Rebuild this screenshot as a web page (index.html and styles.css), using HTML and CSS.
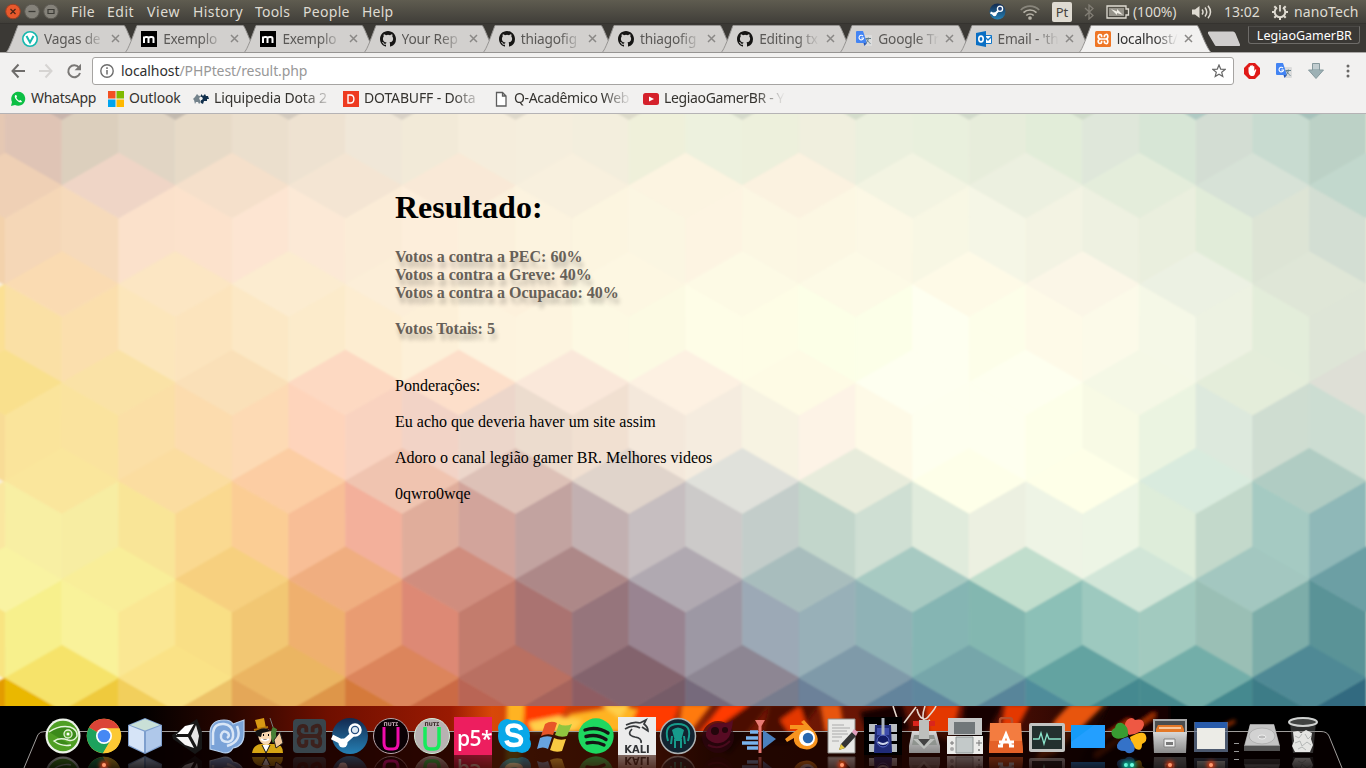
FILE: index.html
```html
<!DOCTYPE html>
<html lang="pt">
<head>
<meta charset="utf-8">
<title>localhost/PHPtest/result.php</title>
<link rel="stylesheet" href="styles.css">
</head>
<body>
<svg class="defs" width="0" height="0" aria-hidden="true">
  <defs>
    <symbol id="github" viewBox="0 0 16 16"><path fill="#161514" d="M8 0C3.58 0 0 3.58 0 8c0 3.54 2.29 6.53 5.47 7.59.4.07.55-.17.55-.38 0-.19-.01-.82-.01-1.49-2.01.37-2.53-.49-2.69-.94-.09-.23-.48-.94-.82-1.13-.28-.15-.68-.52-.01-.53.63-.01 1.08.58 1.23.82.72 1.21 1.87.87 2.33.66.07-.52.28-.87.51-1.07-1.78-.2-3.64-.89-3.64-3.95 0-.87.31-1.59.82-2.15-.08-.2-.36-1.02.08-2.12 0 0 .67-.21 2.2.82a7.6 7.6 0 0 1 4 0c1.53-1.04 2.2-.82 2.2-.82.44 1.1.16 1.92.08 2.12.51.56.82 1.27.82 2.15 0 3.07-1.87 3.75-3.65 3.95.29.25.54.73.54 1.48 0 1.07-.01 1.93-.01 2.2 0 .21.15.46.55.38A8.01 8.01 0 0 0 16 8c0-4.42-3.58-8-8-8z"/></symbol>
    <symbol id="translate" viewBox="0 0 16 16"><path fill="#dcdcdc" d="M6 4h9a1 1 0 0 1 1 1v9a1 1 0 0 1-1 1H9z"/><path fill="#4384f3" d="M1 0h6l4 12H1a1 1 0 0 1-1-1V1a1 1 0 0 1 1-1z"/><path fill="#2454b8" d="M7.500 12H11l-2.500 3z"/><path d="M7 5a2.300 2.300 0 1 0 .6 2H5.300" fill="none" stroke="#fff" stroke-width="1.100"/><path d="M9.500 7.500h5.500M12.300 6.500v1c0 2-1.500 4-2.800 5M10.500 8c1 2 2.500 3.700 4 4.500" fill="none" stroke="#62808c"/></symbol>
    <symbol id="mcube" viewBox="0 0 16 16"><path d="M0 0h16v16H0z"/><path d="M3 12V5.500M3 7.500c0-1.500 4.500-2.500 4.500 0V12M7.500 7.500c0-1.500 5-2.500 5 0V12" fill="none" stroke="#fff" stroke-width="2"/></symbol>
    <symbol id="xampp" viewBox="0 0 16 16"><path d="M6.600 6.300V4.800Q6.600 3.500 5 3.500T3.200 5.500 5.500 8h5Q12.800 8 12.800 5.500T11 3.500 9.400 4.800V6.300M6.600 9.700v1.500q0 1.300-1.600 1.300T3.200 10.500 5.500 8h5q2.300 0 2.300 2.500T11 12.500 9.400 11.200V9.700" fill="none" stroke="currentColor" stroke-width="1.700"/></symbol>
    <symbol id="xmark" viewBox="0 0 9 9"><path d="M1 1l7 7M8 1L1 8" fill="none" stroke="#8a8886" stroke-width="1.500"/></symbol>
    <symbol id="tabshape" viewBox="0 0 132 28"><path d="M0 27.500C3 26 9 8 12 .5H118c2 0 8 20 14 27z" stroke="#969492"/></symbol>
    <linearGradient id="gSilver" x2="0" y2="1"><stop stop-color="#d8d8d8"/><stop offset="1" stop-color="#8b8b8b"/></linearGradient>
    <linearGradient id="gSteam" x2="0" y2="1"><stop stop-color="#13294f"/><stop offset="1" stop-color="#2580b4"/></linearGradient>
  </defs>
</svg>

<header class="panel">
  <div class="wbtns">
    <svg width="54" height="18" viewBox="0 0 54 18"><circle cx="8" cy="8.500" r="7.300" fill="#e8592c" stroke="#9a4024"/><path d="M5.500 6l5 5m0-5l-5 5" stroke="#4b2416" stroke-width="1.300"/><circle cx="27" cy="8.500" r="7.300" fill="#85827a" stroke="#5c5952"/><path d="M23.500 8.500h7" stroke="#3b3a35" stroke-width="1.300"/><circle cx="46" cy="8.500" r="7.300" fill="#85827a" stroke="#5c5952"/><path d="M43 6.500h6v4h-6z" fill="none" stroke="#3b3a35" stroke-width="1.200"/></svg>
  </div>
  <nav class="menu"><span class="m1">File</span><span class="m2">Edit</span><span class="m3">View</span><span class="m4">History</span><span class="m5">Tools</span><span class="m6">People</span><span class="m7">Help</span></nav>
  <div class="indicators">
    <svg class="i-steam" width="17" height="17" viewBox="0 0 17 17"><circle cx="8.500" cy="8.500" r="8" fill="url(#gSteam)"/><path d="M1.500 9.500l4 2L10 7" fill="none" stroke="#fff" stroke-width="2.200"/><circle cx="11" cy="5.700" r="2.600" fill="#24457a" stroke="#fff" stroke-width="1.300"/><circle cx="5.500" cy="11.300" r="2" fill="#fff"/></svg>
    <svg class="i-wifi" width="20" height="16" viewBox="0 0 20 16" fill="none" stroke="#b6b2a7" stroke-width="1.700"><path d="M.8 6C6 .8 14 .8 19.200 6" stroke="#89867c"/><path d="M3.500 8.700c3.600-3.600 9.400-3.600 13 0M6.300 11.500c2-2 5.400-2 7.400 0"/><circle cx="10" cy="14" r="1" fill="#dfdbd2"/></svg>
    <span class="kbd">Pt</span>
    <svg class="i-bt" width="10" height="16" viewBox="0 0 10 16" fill="none" stroke="#827e75" stroke-width="1.300"><path d="M1 4l8 7.500L5 15V1l4 3.500L1 12"/></svg>
    <svg class="i-bat" width="24" height="14" viewBox="0 0 24 14"><path d="M1 1h19v3h2.500v6H20v3H1z" fill="none" stroke="#dfdbd2" stroke-width="1.300"/><path d="M3 3h15v8H3z" fill="#96938a"/><path d="M5 4l6 2.500V4l6 6-6-2v2z" fill="#f1eee6"/></svg>
    <span class="pct">(100%)</span>
    <svg class="i-vol" width="20" height="14" viewBox="0 0 20 14" fill="none" stroke="#dfdbd2" stroke-width="1.500"><path d="M0 4.500h3L7.500 1v12L3 9.500H0z" fill="#dfdbd2" stroke="none"/><path d="M10 4.500q2 2.500 0 5M13 2.500q3.500 4.500 0 9M16 .8q5 6.200 0 12.400"/></svg>
    <span class="clock">13:02</span>
    <svg class="i-gear" width="18" height="18" viewBox="0 0 18 18" fill="none" stroke="#dfdbd2"><path d="M6 4.600a5.300 5.300 0 1 0 6 0" stroke-width="2"/><path d="M9 2v6.500" stroke-width="1.800"/><path d="M1 9h3M14 9h3M9 14v3M3.300 3.300l2 2M14.700 3.300l-2 2M3.300 14.700l2-2M14.700 14.700l-2-2" stroke-width="2"/></svg>
    <span class="user">nanoTech</span>
  </div>
</header>

<div class="tabstrip">
  <div class="tab"><svg class="shape"><use href="#tabshape"/></svg><svg class="fav" viewBox="0 0 16 16"><circle cx="8" cy="8" r="7.200" fill="#fff" stroke="#15b8ae" stroke-width="1.600"/><path d="M4.500 5L8 11.500 11.500 5" fill="none" stroke="#15b8ae" stroke-width="2"/></svg><span class="title">Vagas de</span><svg class="x"><use href="#xmark"/></svg></div>
  <div class="tab"><svg class="shape"><use href="#tabshape"/></svg><svg class="fav"><use href="#mcube"/></svg><span class="title">Exemplo</span><svg class="x"><use href="#xmark"/></svg></div>
  <div class="tab"><svg class="shape"><use href="#tabshape"/></svg><svg class="fav"><use href="#mcube"/></svg><span class="title">Exemplo</span><svg class="x"><use href="#xmark"/></svg></div>
  <div class="tab"><svg class="shape"><use href="#tabshape"/></svg><svg class="fav"><use href="#github"/></svg><span class="title">Your Rep</span><svg class="x"><use href="#xmark"/></svg></div>
  <div class="tab"><svg class="shape"><use href="#tabshape"/></svg><svg class="fav"><use href="#github"/></svg><span class="title">thiagofig</span><svg class="x"><use href="#xmark"/></svg></div>
  <div class="tab"><svg class="shape"><use href="#tabshape"/></svg><svg class="fav"><use href="#github"/></svg><span class="title">thiagofig</span><svg class="x"><use href="#xmark"/></svg></div>
  <div class="tab"><svg class="shape"><use href="#tabshape"/></svg><svg class="fav"><use href="#github"/></svg><span class="title">Editing tx</span><svg class="x"><use href="#xmark"/></svg></div>
  <div class="tab"><svg class="shape"><use href="#tabshape"/></svg><svg class="fav"><use href="#translate"/></svg><span class="title">Google Tr</span><svg class="x"><use href="#xmark"/></svg></div>
  <div class="tab"><svg class="shape"><use href="#tabshape"/></svg><svg class="fav" viewBox="0 0 16 16"><path fill="#fff" stroke="#1277c8" d="M8 4.500h7.500v8H8z"/><path d="M8 5l4 4 4-4" fill="none" stroke="#1277c8" stroke-width="1.300"/><path fill="#0a6fc4" d="M0 2l10-2v16L0 14z"/><ellipse cx="5" cy="8" rx="2.200" ry="2.900" fill="none" stroke="#fff" stroke-width="1.600"/></svg><span class="title">Email - 'th</span><svg class="x"><use href="#xmark"/></svg></div>
  <div class="tab active"><svg class="shape"><use href="#tabshape"/></svg><svg class="fav xa" viewBox="0 0 16 16"><rect width="16" height="16" rx="1.500" fill="#ef7626"/><use href="#xampp" width="16" height="16"/></svg><span class="title">localhost/</span><svg class="x"><use href="#xmark"/></svg></div>
  <svg class="newtab" width="34" height="16" viewBox="0 0 34 16"><path d="M2 .5h24q1.500 0 2.500 2l4.500 11q.5 1.500-1 1.500H9.500q-1.500 0-2-1.500L1 2.500Q.5.500 2 .5z" fill="#d0cecd"/></svg>
  <div class="profile">LegiaoGamerBR</div>
</div>

<div class="toolbar">
  <svg class="navs" width="72" height="16" viewBox="0 0 72 16" fill="none" stroke-width="2"><path d="M15 8H2.500M8.500 1.500L2.500 8l6 6.500" stroke="#6f6d6b"/><path d="M29 8h12.500M35.500 1.500l6 6.500-6 6.500" stroke="#d6d4d2"/><path d="M69 4.500A6 6 0 1 0 70 10" stroke="#7a7876"/><path d="M71 .8v6.400h-6.400z" fill="#7a7876"/></svg>
  <div class="omnibox">
    <svg class="info" width="14" height="14" viewBox="0 0 14 14"><circle cx="7" cy="7" r="6.200" fill="none" stroke="#6d6d6d" stroke-width="1.400"/><path d="M7 6v4.500M7 3.300v1.600" stroke="#6d6d6d" stroke-width="1.500"/></svg>
    <span class="url">localhost<i>/PHPtest/result.php</i></span>
    <svg class="star" width="14" height="14" viewBox="0 0 14 14"><path d="M7 1l1.700 4.100 4.400.3-3.400 2.900 1.100 4.300L7 10.300l-3.800 2.300 1.100-4.300L.9 5.400l4.400-.3z" fill="none" stroke="#666" stroke-width="1.200"/></svg>
  </div>
  <svg class="ext1" width="16" height="16" viewBox="0 0 16 16"><path d="M5 0h6l5 5v6l-5 5H5l-5-5V5z" fill="#e01a17"/><path d="M4.500 8V4.500q.7-.8 1.300 0V3q.8-.8 1.500 0v-.5q.8-.8 1.500 0V3.500q.8-.8 1.500 0V8l1-1.500q1-.5 1 .5L10.500 12q-.5 1-1.500 1H7q-2.500-1-2.500-5z" fill="#fff"/></svg>
  <svg class="ext2" width="16" height="16"><use href="#translate"/></svg>
  <svg class="ext3" width="16" height="16" viewBox="0 0 16 16"><path d="M4.500.5h7v6.500h4L8 15.500.5 7h4z" fill="#9db1b5" stroke="#86999d"/><path d="M5 1h6v5H5z" fill="#c2cdd0"/></svg>
  <svg class="dots" width="4" height="14" viewBox="0 0 4 14" fill="#6a6866"><circle cx="2" cy="2" r="1.500"/><circle cx="2" cy="7" r="1.500"/><circle cx="2" cy="12" r="1.500"/></svg>
</div>

<div class="bookmarks">
  <div class="bm b1"><svg width="16" height="16" viewBox="0 0 16 16"><path d="M1 15l1-4a7 7 0 1 1 3 3z" fill="#0cbf44"/><path d="M5.500 4c-1.500 1-.5 3.500 1.500 5.500s4.500 2.500 5 1L10.500 9 9 9.700Q7 8.500 6.300 6.800L7 5.800 6.300 4z" fill="#fff"/></svg><span class="w1">WhatsApp</span></div>
  <div class="bm b2"><svg width="16" height="16" viewBox="0 0 16 16"><path fill="#f25022" d="M0 0h7.500v7.500H0z"/><path fill="#7fba00" d="M8.500 0H16v7.500H8.500z"/><path fill="#00a4ef" d="M0 8.500h7.500V16H0z"/><path fill="#ffb900" d="M8.500 8.500H16V16H8.500z"/></svg><span class="w2">Outlook</span></div>
  <div class="bm b3"><svg width="16" height="16" viewBox="0 0 16 16"><path d="M4 3l2 2 2-.5V8L7 9l1 2-2 2-1-2H3L2 13 1 9 0 8l2-2z" fill="#74838c"/><path d="M8 3l2 2 2-2 1 2 2 0 1 3-2 0 0 2-3 0-1 3-2-1z" fill="#12304d"/><circle cx="8" cy="7.500" r="1.700" fill="#f2f1f0"/></svg><span class="w3 fade">Liquipedia Dota 2 </span></div>
  <div class="bm b4"><svg width="16" height="16" viewBox="0 0 16 16"><path fill="#ee3b20" d="M0 0h16v16H0z"/><path d="M5 4h2.500c4.500 0 4.500 8 0 8H5z" fill="none" stroke="#fff" stroke-width="1.400"/></svg><span class="w4 fade">DOTABUFF - Dota</span></div>
  <div class="bm b5"><svg width="16" height="16" viewBox="0 0 16 16"><path d="M3.500 1.500h6l3.500 3.500v10H3.500zM9.500 1.500V5H13" fill="#fff" stroke="#5d5d5d" stroke-width="1.300"/></svg><span class="w5 fade">Q-Acadêmico Web</span></div>
  <div class="bm b6"><svg width="16" height="16" viewBox="0 0 16 16"><rect y="2" width="16" height="12" rx="2.500" fill="#d5212b"/><path d="M6 5.500l5 2.500-5 2.500z" fill="#fff"/></svg><span class="w6 fade">LegiaoGamerBR - Y</span></div>
</div>

<main class="page">
  <svg class="hexes" id="hexes" viewBox="0 114 1366 592" preserveAspectRatio="none"></svg>
  <section class="result">
    <h1>Resultado:</h1>
    <p class="votes">Votos a contra a PEC: 60%<br>Votos a contra a Greve: 40%<br>Votos a contra a Ocupacao: 40%<br><br>Votos Totais: 5</p>
    <p class="notes">Ponderações:<br><br>Eu acho que deveria haver um site assim<br><br>Adoro o canal legião gamer BR. Melhores videos<br><br>0qwro0wqe</p>
  </section>
</main>

<footer class="dock">
  <svg class="scene" viewBox="0 706 1366 62" preserveAspectRatio="none">
    <defs>
      <linearGradient id="gFire"><stop offset=".1" stop-color="#000"/><stop offset=".17" stop-color="#2a0600"/><stop offset=".24" stop-color="#6f0f00"/><stop offset=".33" stop-color="#9a1a02"/><stop offset=".36" stop-color="#d84808"/><stop offset=".48" stop-color="#c43406"/><stop offset=".52" stop-color="#7a1c04"/><stop offset=".7" stop-color="#5e1104"/><stop offset=".8" stop-color="#240602"/><stop offset=".84" stop-color="#000"/></linearGradient>
      <filter id="soft" x="-5%" y="-20%" width="110%" height="140%"><feGaussianBlur stdDeviation="2"/></filter>
    </defs>
    <path fill="url(#gFire)" d="M0 706h1366v62H0z"/>
    <g filter="url(#soft)">
      <path fill="#ffb320" d="M507 700h18l-5 68h-15zM570 714l50-8 35 6-30 20h-70z"/>
      <path fill="#ff3a00" d="M524 704h44l-14 24-30 12zM640 704h40l-10 26-45 5zM722 704h36l-40 30-20 0z"/>
      <path fill="#ffcf4a" d="M528 722l30-6 25 4-10 12h-40zM600 704h30l-10 14z"/>
      <path fill="#ff7a10" d="M682 704h30l-22 28h-12z"/>
      <path fill="#e8540a" d="M820 704h20l5 30-20-2zM1070 704h35l-50 50-20 6 20-40z"/>
      <path fill="#4c0f05" d="M700 740l50-36h20l-40 50zM770 704h50l-30 40h-30z"/>
      <path fill="#e43703" d="M780 720l20-14 12 34-14 6zM925 704h35l-10 38-22-10zM1005 704h25l-18 34-12-6z"/>
      <path fill="#160503" d="M965 704h38l-28 50-15-8zM1110 704h60v60h-90zM860 712l42-8 8 26-40 10z"/>
      <path fill="none" stroke="#c93c08" stroke-width="3" d="M1130 720l-35 24M1155 714l-60 42M1235 721l-20 10"/>
    </g>
    <path fill="none" stroke="#e4d6cc" stroke-width="1.600" d="M904 723l12-16M893 706l4 12M917 709c2 10 8 12 11 8s6-6 8-11M925 706c-4 12-2 18 5 14"/>
    <path fill="#080000" fill-opacity=".76" d="M24 768L38 735Q40 732 45 732H1321Q1327 732 1329 736L1342 768z"/>
    <path fill="none" stroke="#a09d9b" d="M24 768L38 734.500Q40 731.500 45 731.500H1321Q1327 731.500 1329 736L1342 768"/>
  </svg>
  <div class="icons">
    <span class="ic"><svg viewBox="0 0 38 38"><circle cx="19" cy="19" r="17.500" fill="#edf3ea"/><circle cx="19" cy="19" r="15.300" fill="#4f9f24"/><path d="M5 15q10-7 21-5 8 3 7 9-3 6-9 4-8-3-14 1 8 6 17 4" fill="#3b8a1a" stroke="#e6f5dc" stroke-width="1.500"/><circle cx="24" cy="17" r="4" fill="#59a82d" stroke="#e6f5dc" stroke-width="1.300"/><circle cx="24" cy="17" r="1.500" fill="#fff"/></svg></span>
    <span class="ic"><svg viewBox="0 0 38 38"><circle cx="19" cy="19" r="17.300" fill="#fcc934"/><path d="M19 19L4 10.500A17.300 17.300 0 0 1 34.500 11.500H19z" fill="#db4437"/><path d="M19 19L4 10.500A17.300 17.300 0 0 0 18 36.300l8-14z" fill="#1da25d"/><path d="M19 11.500h15.500Q37 19 33 29q-5 7-15 7.300L26 23z" fill="#fcc934"/><circle cx="19" cy="19" r="8" fill="#fff"/><circle cx="19" cy="19" r="6.300" fill="#4688f4"/></svg></span>
    <span class="ic"><svg viewBox="0 0 38 38"><path d="M19 1l17 7v21l-17 8-17-8V8z" fill="#7e9fce"/><path d="M3 8.500l15 6v21L3 28z" fill="#d6e4f7"/><path d="M20 14.500l15-6V28l-15 7.500z" fill="#afc8ea"/><path d="M19 2l15 6-15 5.500L4 8z" fill="#c9e0d7"/></svg></span>
    <span class="ic"><svg viewBox="0 0 38 38"><path d="M5 18L30 2l5 13v17l-7 5L6 22z" fill="#171717"/><path d="M9 18l9-9 9-2-6 10H9z" fill="#fff"/><path d="M29 8l3 11-2 11-6-11z" fill="#e5e5e5"/><path d="M9 20h12l6 11-9-3z" fill="#f6f6f6"/></svg></span>
    <span class="ic"><svg viewBox="0 0 38 38"><path d="M2 32V15Q3 3 16 3q7 0 9 4l11-4v14q0 12-11 14-4 7-12 4z" fill="#7ba3d8" stroke="#b9d1ee" stroke-width="1.200"/><path d="M5 28V16Q6 6 16 7q8 1 9 9t-5 9q-8 0-7-7 2-6 7-2 2 3-1 5M29 9q6 15-10 20" fill="none" stroke="#d9e6f6" stroke-width="2.500"/></svg></span>
    <span class="ic"><svg viewBox="0 0 38 38"><path d="M3 36q1-8 9-9h14q8 0 8 9z" fill="#d7a514"/><path d="M6 3l9-2 2 10-8 2z" fill="#d99913"/><path d="M5 13l14-3" stroke="#b17208" stroke-width="2"/><path d="M9 16q2-6 10-4 6 3 3 12-3 6-8 3-5-3-5-11z" fill="#f7d7b0"/><path d="M6 15q9-7 16-1l-9 2-1 4-4-1z" fill="#111"/><path d="M12 22q4 3 8 0" stroke="#fff" stroke-width="2"/><path d="M14 18h1m4 0h1" stroke="#000" stroke-width="2"/><path d="M24 10L21 1" stroke="#777"/><path d="M26 11q-3 5 0 14" fill="none" stroke="#477f36" stroke-width="5"/><path d="M25 23l6-8 3 11-7 5z" fill="#f2c99d" stroke="#222"/><path d="M13 28l4 8 4-8" fill="#fff" stroke="#111"/></svg></span>
    <span class="ic xd"><svg viewBox="0 0 38 38"><rect x="3" y="2" width="33" height="34" rx="4" fill="#39454c"/><use href="#xampp" x="1" y="1" width="37" height="36"/></svg></span>
    <span class="ic"><svg viewBox="0 0 38 38"><circle cx="19" cy="19" r="18" fill="url(#gSteam)"/><path d="M1 20l12 6M12 26l10-9" stroke="#fff" stroke-width="5"/><circle cx="12" cy="26" r="4.500" fill="#fff"/><circle cx="24" cy="13" r="5.500" fill="#244c7d" stroke="#fff" stroke-width="2.500"/><circle cx="24" cy="13" r="3" fill="#dce8f2"/></svg></span>
    <span class="ic"><svg viewBox="0 0 38 38"><circle cx="19" cy="19" r="17.500" fill="#0b0105" stroke="#b9a6aa"/><text x="19" y="8.500" text-anchor="middle" class="tiny light">ΠUTΣ</text><path d="M12 10v16q0 6 5 6h4q5 0 5-6V10" fill="none" stroke="#f20cab" stroke-width="3"/></svg></span>
    <span class="ic"><svg viewBox="0 0 38 38"><circle cx="19" cy="19" r="17.500" fill="#b8b2b2" stroke="#d5ebd8"/><text x="19" y="8.500" text-anchor="middle" class="tiny">ΠUTΣ</text><path d="M12 10v16q0 6 5 6h4q5 0 5-6V10" fill="none" stroke="#17eb5c" stroke-width="3.500"/></svg></span>
    <span class="ic"><svg viewBox="0 0 38 38"><path fill="#ed1e5f" d="M0 0h38v38H0z"/><text x="3" y="29" class="p5">p5*</text></svg></span>
    <span class="ic"><svg viewBox="0 0 38 38"><circle cx="19" cy="19" r="16" fill="#0aa8e8"/><circle cx="12" cy="11" r="9" fill="#0aa8e8"/><circle cx="27" cy="27" r="9" fill="#0aa8e8"/><path d="M26 13q-1-4.500-7-4.500-6.500 0-6.500 4.500t6.500 5q7 1 7 5.500T19 28q-6.500 0-7.500-4.500" fill="none" stroke="#fff" stroke-width="4.500"/></svg></span>
    <span class="ic"><svg viewBox="0 0 38 38"><path d="M9 7q6-4 12-1l-4 12q-6-2-12 1z" fill="#e75528"/><path d="M23 7q6 3 13 0l-5 12q-6 2-12-1z" fill="#90c53f"/><path d="M4 21q6-3 12-1l-4 12q-5-3-11 0z" fill="#68a4df"/><path d="M18 21q6 3 12 1l-4 12q-6 2-12-1z" fill="#f8c942"/></svg></span>
    <span class="ic"><svg viewBox="0 0 38 38"><circle cx="19" cy="19" r="17.700" fill="#1ed760"/><path d="M8 13q12-4 23 3M9 19.500q11-3 20 3M10 26q9-2 17 2" fill="none" stroke="#151515" stroke-width="3.400" stroke-linecap="round"/></svg></span>
    <span class="ic"><svg viewBox="0 0 38 38"><path fill="#ececec" d="M0 0h38v38H0z"/><path d="M8 8q8-4 14-2M7 12q8-5 15-1M22 6l6-3-2 4q4 3 4 7l-6-4M14 12q-6 6 3 8 7 1 6 6" fill="none" stroke="#36393c" stroke-width="1.700"/><text x="19" y="36" text-anchor="middle" class="kali">KALI</text></svg></span>
    <span class="ic"><svg viewBox="0 0 38 38"><circle cx="19" cy="19" r="17.500" fill="#122330" stroke="#abb1b2" stroke-width="1.500"/><path d="M9 24q-5-17 10-17t10 17M12 27l1-8m13 8l-1-8M16 31v-9m6 9v-9" fill="none" stroke="#169b8b" stroke-width="2"/><path d="M13 13q6-5 12 0l-3 11h-6z" fill="#169b8b"/></svg></span>
    <span class="ic"><svg viewBox="0 0 38 38"><circle cx="18" cy="20" r="16" fill="#2c0610" opacity=".7"/><path d="M6 16Q10 5 19 6t14-3q-1 11-4 17-7 9-17 5-7-3-6-9z" fill="#570b23"/><circle cx="15" cy="14" r="4" fill="#23060b"/><circle cx="25" cy="13" r="3" fill="#23060b"/><path d="M8 28q12 6 22-4" stroke="#470a1c" stroke-width="2" fill="none"/></svg></span>
    <span class="ic"><svg viewBox="0 0 38 38"><path d="M9 15h8M5 21h12M1 26h16M6 31h11" stroke="#79b3ed" stroke-width="3.500"/><path d="M22 13l13 9-13 10z" fill="#4a80bd"/><path d="M14 3h10l-3.500 6v27h-3V9z" fill="#e77973"/></svg></span>
    <span class="ic"><svg viewBox="0 0 38 38"><path d="M3 22L16 12H8V8h14l-3-3 3-2 11 12q5 8 1 13-6 7-16 3-7-4-6-10l-7 4z" fill="#f7941f"/><circle cx="25" cy="21" r="8" fill="#fff"/><circle cx="26" cy="21" r="5.200" fill="#2867af"/></svg></span>
    <span class="ic"><svg viewBox="0 0 38 38"><path d="M5 2h27v34H5z" fill="#e8e8e6" stroke="#8f8f8b"/><path d="M9 8h12M9 11h18M9 14h15M9 17h16M9 20h10M9 24h7" stroke="#aaa"/><path d="M18 27L29 15l4 4-11 12-6 2z" fill="#343434"/><path d="M18 27l4 4-6 2z" fill="#e6ca42"/><path d="M29 15l2-3 4 3-2 4z" fill="#e3a0bd"/></svg></span>
    <span class="ic"><svg viewBox="0 0 38 38"><path d="M0 0h38v38H0z" fill="#000"/><path d="M5 7h8v8H5zm20 0h8v8h-8zM5 17h8v7H5zm20 0h8v7h-8zM5 27h8v8H5zm20 0h8v8h-8z" fill="#b8bec3"/><path d="M11 8h16l1 28H10z" fill="#202b78"/><path d="M13 11h12v7H13z" fill="#3d4cab"/><path d="M19 1v18" stroke="#aab3bd" stroke-width="3"/><circle cx="19" cy="24" r="6" fill="#121b65" stroke="#5b6bc9"/><path d="M14 25q5 4 10 0" stroke="#cdd6ed" stroke-width="2" fill="none"/></svg></span>
    <span class="ic"><svg viewBox="0 0 38 38"><path d="M8 4h22v5H8z" fill="#da251c"/><path d="M7 14h24l4 15v7H4v-7z" fill="url(#gSilver)"/><path d="M9 18h20l3 10H7z" fill="#8f948f"/><path d="M14 3h10v19h6L19 32 8 22h6z" fill="#bdc0bd"/><path d="M13 22h12l-6 7z" fill="#434343"/></svg></span>
    <span class="ic"><svg viewBox="0 0 38 38"><path d="M2 1h34v17H2z" fill="#c6c8c8"/><path d="M8 5h21v12H8z" fill="#71777a"/><path d="M1 19h36v18H1z" fill="#ededeb"/><path d="M10 20h17v16H10z" fill="#c3c9c9" stroke="#8f9696"/><path d="M4 26h4m-2-2v4M30 26h6m-3-3v6" stroke="#777"/><circle cx="6" cy="32" r="2" fill="#aaa"/><circle cx="33" cy="33" r="1" fill="#777"/></svg></span>
    <span class="ic"><svg viewBox="0 0 38 38"><path d="M13 12V3q0-2 3-2h6q3 0 3 2v9" fill="none" stroke="#b6512e" stroke-width="2.500"/><path d="M3 6h31l2 30H2z" fill="#f37c40"/><path d="M3 24h32l1 12H2z" fill="#e46127"/><path d="M14 29l5-12 5 12M12 25h15M11 29h5m6 0h5" fill="none" stroke="#fff" stroke-width="2.800"/></svg></span>
    <span class="ic"><svg viewBox="0 0 38 38"><rect x="1" y="6" width="36" height="29" rx="2" fill="#c3c4c2"/><path d="M4 9h30v23H4z" fill="#23302f"/><path d="M5 22h6l2-6 3 11 3-10 2 5h12" fill="none" stroke="#8ce5cc" stroke-width="1.300"/></svg></span>
    <span class="ic"><svg viewBox="0 0 38 38"><path d="M2 8h34v23H2z" fill="#159bf8"/><path d="M2 25L25 8h11v23H2z" fill="#239fff"/></svg></span>
    <span class="ic"><svg viewBox="0 0 38 38"><path d="M19 18Q12 9 17 3q5-4 8 0 9-2 9 5-2 9-15 10z" fill="#ee5843"/><path d="M18 19Q6 25 2 18q-2-5 3-7 1-6 7-5 7 3 6 13z" fill="#389c32"/><path d="M20 20q14-8 16-1 2 5-4 8 0 8-6 5-5-4-6-12z" fill="#ffb914"/><path d="M18 20q10 11 5 15-5 3-8-1-9 0-8-6 3-7 11-8z" fill="#3472c8"/></svg></span>
    <span class="ic"><svg viewBox="0 0 38 38"><path d="M3 3h32v13H3z" fill="#4b4d4e" stroke="#aaa" stroke-width="2"/><path d="M5 12l2-4h24l2 4v4H5z" fill="#e47827"/><path d="M8 11h22" stroke="#f9c69a" stroke-width="2"/><path d="M2 15h34l-1 21H3z" fill="url(#gSilver)"/><path d="M13 22h11v8H13z" fill="#eee" stroke="#818181"/><path d="M15 25h7v3h-7z" fill="#787878"/></svg></span>
    <span class="ic"><svg viewBox="0 0 38 38"><path d="M2 5h34v30H2z" fill="#647794" opacity=".75"/><path d="M3 5h32v6H3z" fill="#285baa"/><path d="M5 11h28v21H5z" fill="#ecece7"/></svg></span>
    <span class="sep"></span>
    <span class="ic"><svg viewBox="0 0 38 38"><path d="M7 7h24l6 22v5H1v-5z" fill="#999"/><path d="M7 8h24l5 20H2z" fill="#c4c4c4"/><ellipse cx="19" cy="19" rx="13" ry="8" fill="#d2d2d2" stroke="#b1b1b1"/><ellipse cx="19" cy="20" rx="4" ry="2" fill="#bbb" stroke="#eee"/><path d="M1 29h36v5H1z" fill="#525252"/></svg></span>
    <span class="ic"><svg viewBox="0 0 38 38"><path d="M6 5h26l-3 31H9z" fill="#737675" opacity=".4"/><ellipse cx="19" cy="5" rx="14" ry="4" fill="#414342" stroke="#d0d2d1" stroke-width="2"/><path d="M9 15l5-1 3 2 5-3 6 3-1 6 2 6-3 7H11l-3-6 2-5z" fill="#e5e5e3"/><path d="M11 19l4 2 3-4M21 17l3 5 3-3M11 26l5-2 2 5 5-4 4 3M14 32l4-2 4 3" fill="none" stroke="#b4b7b6"/></svg></span>
  </div>
  <div class="lights"><i class="red l1"></i><i class="red l2"></i><i class="teal l3"></i><i class="teal l4"></i><i class="red l5"></i><i class="red l6"></i></div>
</footer>
<script src="hexagons.js"></script>
</body>
</html>
```
FILE: styles.css
```css
* { box-sizing: border-box; }
body { margin: 0; width: 1366px; height: 768px; overflow: hidden; display: flex; flex-direction: column; font-family: "Noto Sans", "Open Sans", sans-serif; font-size: 14px; background: #000; }
svg { flex: none; display: block; }
.defs { position: absolute; }

.panel { height: 24px; flex: none; display: flex; align-items: center; background: linear-gradient(#5f5c50, #403e39); border-bottom: 1px solid #35332f; color: #dfdbd2; white-space: nowrap; }
.wbtns { width: 71px; padding-left: 5px; flex: none; }
.menu { display: flex; }
.menu span { flex: none; line-height: 22px; }
.m1 { width: 36px; letter-spacing: .4px; }
.m2 { width: 40px; letter-spacing: .5px; }
.m3 { width: 46px; letter-spacing: .6px; }
.m4 { width: 62px; letter-spacing: .4px; }
.m5 { width: 48px; letter-spacing: .2px; }
.m6 { width: 59px; letter-spacing: .3px; }
.m7 { width: 40px; letter-spacing: .2px; }
.indicators { display: flex; align-items: center; margin-left: auto; width: 377px; }
.i-wifi { margin-left: 14px; }
.kbd { margin-left: 12px; width: 20px; height: 20px; line-height: 20px; border-radius: 2px; background: #dfdbd2; color: #45433d; text-align: center; font-size: 13px; }
.i-bt { margin-left: 12px; }
.i-bat { margin-left: 12px; }
.pct { margin-left: 3px; width: 46px; letter-spacing: -.1px; }
.i-vol { margin-left: 13px; }
.clock { margin-left: 12px; width: 38px; }
.i-gear { margin-left: 9px; }
.user { margin-left: 5px; letter-spacing: .1px; }

.tabstrip { height: 29px; flex: none; display: flex; background: #3b3935; padding-left: 12px; align-items: flex-start; border-bottom: 1px solid #aaa8a6; }
.tab { position: relative; width: 119.2px; height: 29px; flex: none; display: flex; align-items: center; padding-left: 10px; }
.shape { position: absolute; left: -6px; top: 1px; width: 132px; height: 28px; fill: #d2d0ce; }
.active { z-index: 2; }
.active .shape { fill: #f2f1f0; }
.fav { position: relative; width: 16px; height: 16px; }
.xa { color: #fff; }
.title { position: relative; margin-left: 6px; width: 62px; white-space: nowrap; color: #5a5856; line-height: 24px; font-size: 13.700px; letter-spacing: -.2px; -webkit-mask-image: linear-gradient(90deg, #000 62%, transparent 98%); mask-image: linear-gradient(90deg, #000 62%, transparent 98%); }
.active .title { color: #333; }
.x { position: relative; margin-left: 5px; width: 9px; height: 9px; }
.newtab { margin: 7px 0 0 3.500px; }
.profile { margin: 2px 0 0 7px; width: 112px; height: 18px; border: 1px solid #6d6b68; border-top-color: #4a4845; border-radius: 0 0 3px 3px; background: #3a3835; color: #fff; font-size: 12.500px; line-height: 17px; text-align: center; white-space: nowrap; }

.toolbar { height: 33px; flex: none; display: flex; align-items: center; background: #f2f1f0; padding-left: 10px; padding-bottom: 2px; }
.navs { margin-top: 4px; }
.omnibox { margin: 5px 0 0 10px; width: 1142px; height: 28px; flex: none; border: 1px solid #a6a4a2; border-radius: 3px; background: #fff; display: flex; align-items: center; padding: 0 7px; }
.url { margin-left: 7px; color: #303030; letter-spacing: -.08px; line-height: 24px; padding-bottom: 1px; }
.url i { font-style: normal; color: #989898; }
.star { margin-left: auto; }
.ext1 { margin: 4px 0 0 10px; }
.ext2 { margin: 4px 0 0 16px; }
.ext3 { margin: 4px 0 0 16px; }
.dots { margin: 5px 0 0 22px; }

.bookmarks { height: 28px; flex: none; display: flex; background: #f2f1f0; border-bottom: 1px solid #b5b3b5; padding-left: 10px; color: #35332f; }
.bm { display: flex; align-items: center; gap: 5px; height: 27px; white-space: nowrap; padding-bottom: 2px; letter-spacing: -.15px; }
.bm span { line-height: 22px; margin-top: -1px; }
.b1 { width: 98px; letter-spacing: -.3px; } .b2 { width: 85px; } .b3 { width: 150px; } .b4 { width: 150px; } .b5 { width: 150px; } .b6 { width: 150px; }
.w3, .w4 { width: 119px; }
.w5 { width: 118px; letter-spacing: -.35px; }
.w6 { width: 121px; letter-spacing: -.35px; }
.fade { -webkit-mask-image: linear-gradient(90deg, #000 75%, transparent 100%); mask-image: linear-gradient(90deg, #000 75%, transparent 100%); }

.page { position: relative; height: 592px; flex: none; overflow: hidden; background: #faf0d9; font-family: "Liberation Serif", serif; font-size: 16px; line-height: 18px; }
.hexes { position: absolute; inset: 0; width: 1366px; height: 592px; }
.result { position: relative; padding: 75px 0 0 395px; color: #000; }
h1 { margin: 0 0 22px; font-size: 32px; line-height: 37px; }
.votes { margin: 0 0 39px; font-weight: bold; color: #666058; text-shadow: 2px 6px 4px rgba(0,0,0,.25); }
.notes { margin: 0; }

.dock { position: relative; height: 62px; flex: none; overflow: hidden; background: #000; }
.scene { position: absolute; inset: 0; width: 1366px; height: 62px; }
.icons { position: relative; display: flex; padding: 11px 0 0 42.500px; }
.ic { width: 41px; height: 38px; flex: none; padding: 0 1.500px; -webkit-box-reflect: below 0 linear-gradient(transparent 40%, rgba(0,0,0,.4)); }
.ic svg { width: 38px; height: 38px; }
.xd { color: #3c211d; }
.sep { width: 10px; height: 19px; flex: none; margin-top: 26px; background: repeating-linear-gradient(#999 0 1px, transparent 1px 8px); background-size: 5px 100%; background-repeat: no-repeat; background-position: 2px 0; }
.tiny { font: bold 5px "DejaVu Sans", sans-serif; fill: #322; }
.light { fill: #c5adb5; }
.p5 { font: 600 21px "Open Sans", sans-serif; fill: #fff; letter-spacing: -.5px; }
.kali { font: bold 10px "DejaVu Sans", sans-serif; fill: #303235; }
.lights i { position: absolute; top: 57px; width: 4px; height: 4px; border-radius: 50%; }
.red { background: #ff9a70; box-shadow: 0 0 4px 2px #d93a12; }
.teal { background: #6dffe0; box-shadow: 0 0 4px 2px #08a989; }
.l1 { left: 102px; } .l2 { left: 840px; } .l3 { left: 1124px; } .l4 { left: 1130px; } .l5 { left: 1168px; } .l6 { left: 1209px; }
```
FILE: hexagons.js
```js
// Isometric cube wallpaper: each row has diamond tops and two side faces per cube.
const STEP = 56.7, LEFT = 5.2, ROW = 98.45, HALF = 32.6;
const rows = [
  { tops: "c9b6ad c4bbb0 d5ccc0 dad3c7 e0dacc dedccb d7dccc d5decc d3dccc d0dccb b0cbc4 a7c3bc",
    sides: "e5c8b3 dfc4b5 dccfbd e1d5c4 e7dac7 ebdfcd eee2d1 f0e7d8 f2ead8 f5eddc f5eedd f3eedd eff0da edf1de edf0dc f0efde ebf0de e9f0dd e7eddb e2edd9 dfe7da d7e6d6 d3ddd3 c8dbd0 bcd1c6" },
  { tops: "efd0b5 efd5c6 f5e0cb f4e5d3 f9e9d7 f8f0de fcf4e1 fbf2e0 f3f4e2 ecf0e0 e4eddb d7e2d7 c2d8cd",
    sides: "f3d2ac f5d7b7 f6dabb fbe1cb fce2cc fde5d2 fce9d6 fbecd7 fdeedb fbf0dc fcf3df fcf5e0 fbf6e2 fdf4e2 fcf7e3 fcf7e3 fcf8e5 f8f7e4 f5f6e6 f3f3e3 eef1e1 eaefde e1ecd9 dde4d5 d3ded3" },
  { tops: "fadbb2 fce6c3 fcecd0 fceed8 fdf1dc fdf7e2 fdfae5 fdfae6 fefae7 fbf6e7 ecf1e3 dfe6d7",
    sides: "fbe094 fae0a5 fbdfad fce6bb fce4bd fce8c5 fcebcb fdedd1 fdf0d8 fdf3de fdf4df fdf9e3 fcfae3 fefde7 fefde6 fcffe7 fcffe8 fefff0 fdfee9 fefae8 fcfae9 f5f8e7 edf2e2 e3edda dee5d7" },
  { tops: "f9e08d fae2a6 fae0b8 fdd9c2 fddfca fae8da fdf1e2 fefbe5 fefff0 feffef f5f8e6 e4edda dedfd6",
    sides: "f8dc96 fae49b fae39e fbdfa6 fcdcae fddab4 fed4bb f9d3c0 f2d3c6 ecd6ca ecdcce f1e0d1 f4e8db f5ecdf f7f3e2 fdf3e6 fefae7 feffef feffef fdffe9 f8fae5 ebf4e1 dde9dd cfddd1 ccddd2" },
  { tops: "fae69c fbdda0 fccda3 f0c4b0 ddc1b7 e0d4cb e0e1db e8ecdc feffe9 feffe8 d9ebde b0ccc3",
    sides: "fae7a0 f8efa3 f7eda2 f9e597 fad990 fbcd94 f8be96 f3b09b e0ad9b d2a49b c2a3a0 c2b0b1 c6bec0 cccac9 c3cdca c2d6cb cfdfd3 e0ebdc ecf0e1 eef4e5 edf5e5 deedda c3d9cb a5cac2 8fb8b8" },
  { tops: "f9f3a2 f9ee99 f7d07f f0ae80 d08d7e ad8888 b0a9b1 a8bdbd a7cac2 c1decd d2e6d8 a3c7c0 6c9fa4",
    sides: "f8e481 f7f08c f9f29a fae793 f9df85 f2c773 efb06e e99c72 dd8974 c37c6d aa7371 96757c 998491 9d98a4 9ca9b6 98b0b8 8fb2b6 85b5b3 83b7b0 8cc0b7 9dc9bf a2cabf 9abfb5 7dada9 5a9397" },
  { tops: "f6e36b fae286 ebb562 dc855b b97062 83636d 8d8693 7f9aa9 76a6aa 63a3a1 73aea9 4f8995",
    sides: "e39c00 eab800 efca3c f2cf5b edc268 e4a758 de9649 d57a3b cb6a45 b96554 a6635b 8e5d63 765b67 766a7c 777b8d 6c8199 64849c 5f879e 58859a 508d9b 448990 478b90 44898f 3e7b87 306b80" }
];
const x = i => LEFT + STEP * i;
const poly = (pts, c) => `<polygon points="${pts.map(p => p.map(n => n.toFixed(1)).join()).join(" ")}" fill="#${c}" stroke="#${c}" stroke-width=".6"/>`;
let out = "";
rows.forEach((row, r) => {
  const t = 54.5 + ROW * r, odd = r % 2 === 0 ? 1 : 0;
  row.sides.split(" ").forEach((c, k) => {
    const i = k - 1, isCenter = Math.abs(i) % 2 === odd;
    const a = t + (isCenter ? 2 * HALF : HALF), b = t + (isCenter ? HALF : 2 * HALF);
    out += poly([[x(i), a], [x(i + 1), b], [x(i + 1), b + 67], [x(i), a + 67]], c);
  });
  row.tops.split(" ").forEach((c, k) => {
    const i = 2 * k + odd;
    out += poly([[x(i - 1), t + HALF], [x(i), t], [x(i + 1), t + HALF], [x(i), t + 2 * HALF]], c);
  });
});
document.getElementById("hexes").innerHTML =
  `<filter id="edge" x="-2%" y="-2%" width="104%" height="104%"><feGaussianBlur stdDeviation=".8"/></filter><g filter="url(#edge)">${out}</g>`;
```
